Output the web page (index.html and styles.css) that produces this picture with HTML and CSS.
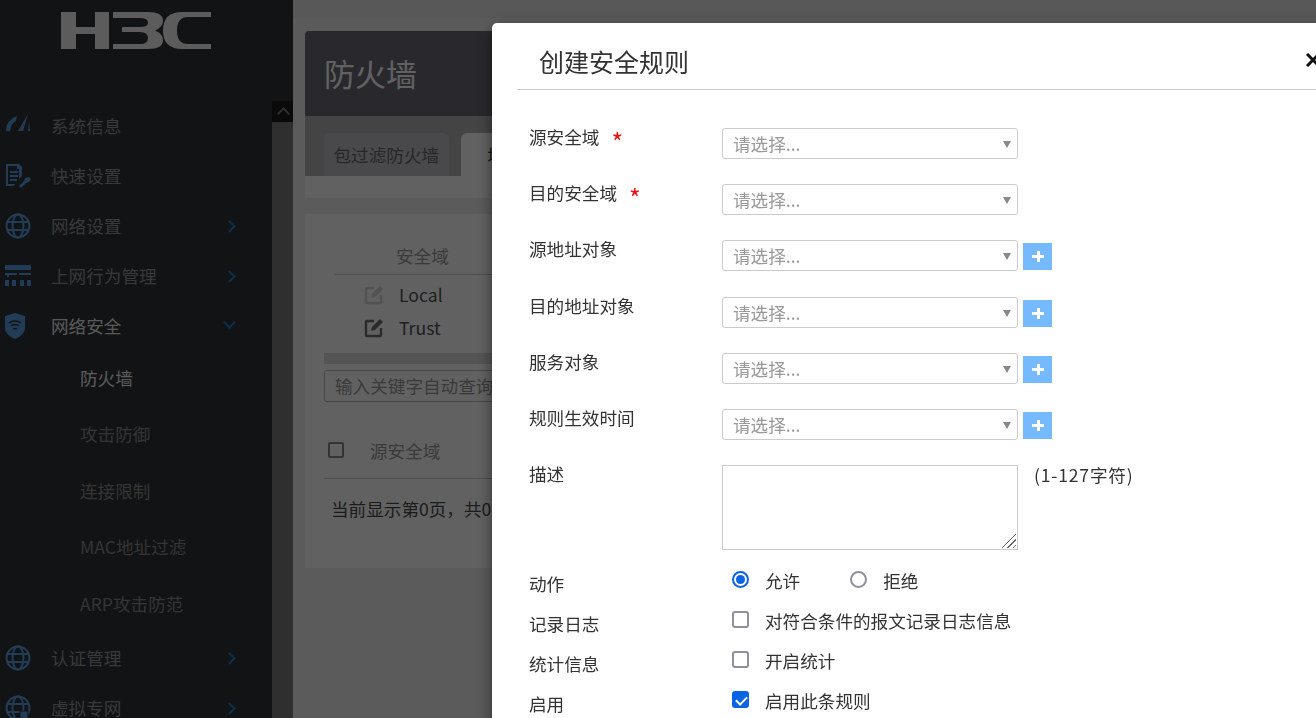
FILE: index.html
```html
<!DOCTYPE html>
<html lang="zh-CN">
  <head>
    <meta charset="UTF-8" />
    <title>防火墙</title>
    <link rel="stylesheet" href="styles.css">
  </head>
  <body>
    <div class="page">
      <aside class="sidebar">
        <div class="logo">
          <svg width="151" height="37" viewBox="0 0 151 37">
            <path d="M1 0h15v15h19v-15h14v37h-14v-15h-19v15h-15z" />
            <path d="M53 0h35q15 0 15 9q0 6-8 9.500q8 3 8 9.500q0 9-15 9h-35v-5h27q8 0 8-6t-8-6h-18v-5h18q8 0 8-4.500t-8-4.500h-27z" />
            <path d="M151 0h-29q-19 0-19 18.500t19 18.500h29v-5h-23q-11 0-11-13.500t11-13.500h23z" />
          </svg>
        </div>
        <div class="side-body">
          <nav class="menu">
            <a class="menu-item">
              <svg class="menu-icon" viewBox="0 3 26 20"><path d="M1 18q0-11 11-15l-1 5q-5 2-6 10zM13 18l10-17-5 17zM24 9l1 9h-2z" /></svg>
              系统信息
            </a>
            <a class="menu-item">
              <svg class="menu-icon" viewBox="0 0 26 26"><path d="M1 1h13l3 3v9l-3 3v-10h-2v-3h-9v18h7l-1 2h-8zM5 8h8v2h-8zM5 12h8v2h-8zM5 16h7v2h-7zM24 14l2 2-2 3-3 1-5 5-2-2 5-5 1-3z" /></svg>
              快速设置
            </a>
            <a class="menu-item has-sub">
              <svg class="menu-icon line" viewBox="0 0 26 26"><circle cx="13" cy="13" r="11.500" /><ellipse cx="13" cy="13" rx="5.500" ry="11.500" /><path d="M2 9h22M2 17h22" /></svg>
              网络设置
            </a>
            <a class="menu-item has-sub">
              <svg class="menu-icon" viewBox="0 0 26 22"><path d="M0 0h26v5h-26zM0 8h12v2h-12zM14 8h12v2h-12zM0 12h2v-2h2v2zM0 15h4v6h-4zM7 15h4v6h-4zM15 15h4v6h-4zM22 15h4v6h-4z" /></svg>
              上网行为管理
            </a>
            <a class="menu-item open has-sub">
              <svg class="menu-icon shield" viewBox="0 0 20 26" preserveAspectRatio="xMinYMid"><path d="M10 0l10 3v12q0 7-10 11q-10-4-10-11v-12z" /><path class="wifi" d="M4 10q6-4 12 0M6 13q4-3 8 0M8 16q2-1 4 0" /></svg>
              网络安全
            </a>
            <a class="sub-item current">防火墙</a>
            <a class="sub-item">攻击防御</a>
            <a class="sub-item">连接限制</a>
            <a class="sub-item">MAC地址过滤</a>
            <a class="sub-item">ARP攻击防范</a>
            <a class="menu-item has-sub">
              <svg class="menu-icon line" viewBox="0 0 26 26"><circle cx="13" cy="13" r="11.500" /><ellipse cx="13" cy="13" rx="5.500" ry="11.500" /><path d="M2 9h22M2 17h22" /></svg>
              认证管理
            </a>
            <a class="menu-item has-sub">
              <svg class="menu-icon line" viewBox="0 0 26 26"><circle cx="13" cy="13" r="11.500" /><ellipse cx="13" cy="13" rx="5.500" ry="11.500" /><path d="M2 9h22M2 17h22" /><rect class="lock" x="15" y="16" width="8" height="8" /></svg>
              虚拟专网
            </a>
          </nav>
          <div class="side-scroll">
            <div class="scroll-up"></div>
          </div>
        </div>
      </aside>

      <main class="main">
        <div class="top-strip"></div>
        <section class="head-card">
          <h1>防火墙</h1>
          <div class="tabs">
            <span class="tab">包过滤防火墙</span>
            <span class="tab active">域间</span>
          </div>
        </section>
        <div class="tab-foot"></div>

        <section class="panel">
          <div class="zone-head">安全域</div>
          <div class="zone-row muted">
            <svg class="edit-icon" viewBox="0 0 20 20"><path class="box" d="M10 3h-7q-1 0-1 1v13q0 1 1 1h13q1 0 1-1v-7" /><path class="pen" d="M7 13l1-4 8-8 3 3-8 8z" /></svg>
            Local
          </div>
          <div class="zone-row">
            <svg class="edit-icon" viewBox="0 0 20 20"><path class="box" d="M10 3h-7q-1 0-1 1v13q0 1 1 1h13q1 0 1-1v-7" /><path class="pen" d="M7 13l1-4 8-8 3 3-8 8z" /></svg>
            Trust
          </div>
          <div class="panel-bar"></div>
          <div class="search-box">输入关键字自动查询</div>
          <div class="table-head">
            <span class="fake-check"></span>
            <span>源安全域</span>
          </div>
          <div class="table-foot">当前显示第0页，共0页</div>
        </section>
      </main>
    </div>

    <div class="overlay"></div>

    <div class="modal">
      <div class="modal-head">
        <h2>创建安全规则</h2>
        <svg class="close" viewBox="0 0 14 14"><path d="M1 1l12 12M13 1l-12 12" /></svg>
      </div>
      <form class="form">
        <div class="row">
          <label>源安全域<em>*</em></label>
          <div class="pick">请选择...</div>
        </div>
        <div class="row">
          <label>目的安全域<em>*</em></label>
          <div class="pick">请选择...</div>
        </div>
        <div class="row">
          <label>源地址对象</label>
          <div class="pick">请选择...</div>
          <button type="button" class="add"></button>
        </div>
        <div class="row">
          <label>目的地址对象</label>
          <div class="pick">请选择...</div>
          <button type="button" class="add"></button>
        </div>
        <div class="row">
          <label>服务对象</label>
          <div class="pick">请选择...</div>
          <button type="button" class="add"></button>
        </div>
        <div class="row">
          <label>规则生效时间</label>
          <div class="pick">请选择...</div>
          <button type="button" class="add"></button>
        </div>
        <div class="row row-desc">
          <label>描述</label>
          <div class="desc-box"><textarea></textarea></div>
          <span class="hint">(1-127字符)</span>
        </div>
        <div class="row-check">
          <label>动作</label>
          <div class="options">
            <input type="radio" name="action" checked />
            <span class="opt-text">允许</span>
            <input class="second" type="radio" name="action" />
            <span class="opt-text">拒绝</span>
          </div>
        </div>
        <div class="row-check">
          <label>记录日志</label>
          <div class="options">
            <input type="checkbox" />
            <span class="opt-text">对符合条件的报文记录日志信息</span>
          </div>
        </div>
        <div class="row-check">
          <label>统计信息</label>
          <div class="options">
            <input type="checkbox" />
            <span class="opt-text">开启统计</span>
          </div>
        </div>
        <div class="row-check">
          <label>启用</label>
          <div class="options">
            <input type="checkbox" checked />
            <span class="opt-text">启用此条规则</span>
          </div>
        </div>
      </form>
    </div>
  </body>
</html>
```

FILE: styles.css
```css
* {
  box-sizing: border-box;
}
html,
body {
  margin: 0;
  height: 100%;
  overflow: hidden;
}
body {
  font-family: "Noto Sans CJK SC", "Liberation Sans", sans-serif;
  font-size: 17.600px;
  color: #333;
}
.page {
  display: flex;
  height: 718px;
  background: #eeeeee;
}

/* sidebar */
.sidebar {
  width: 293px;
  flex: none;
  display: flex;
  flex-direction: column;
  background: #2f3336;
}
.logo {
  height: 101px;
  flex: none;
  padding: 12px 0 0 60px;
}
.logo svg {
  display: block;
  fill: #f2f2f2;
}
.side-body {
  flex: 1;
  display: flex;
  min-height: 0;
}
.menu {
  flex: 1;
  overflow: hidden;
}
.menu-item {
  display: flex;
  align-items: center;
  height: 50px;
  padding-left: 5px;
  line-height: 50px;
  color: #959595;
  position: relative;
}
.menu-item.open {
  color: #e8e8e8;
}
.menu-icon {
  width: 26px;
  height: 26px;
  margin-right: 20px;
  fill: #5a9fe6;
  flex: none;
}
.menu-icon.line {
  fill: none;
  stroke: #5a9fe6;
  stroke-width: 2;
}
.menu-icon .lock {
  fill: #5a9fe6;
  stroke: #2f3336;
  stroke-width: 1;
}
.menu-icon .wifi {
  fill: none;
  stroke: #2f3336;
  stroke-width: 1.500;
}
.has-sub::after {
  content: "";
  position: absolute;
  left: 225px;
  top: 21px;
  width: 7px;
  height: 7px;
  border-top: 2px solid #2678cc;
  border-right: 2px solid #2678cc;
  transform: rotate(45deg);
}
.menu-item.open::after {
  left: 225px;
  top: 17px;
  transform: rotate(135deg);
}
.sub-item {
  display: block;
  height: 56.400px;
  line-height: 54px;
  padding-left: 80px;
  color: #8a8a8a;
}
.sub-item.current {
  color: #eeeeee;
}
.side-scroll {
  width: 21px;
  flex: none;
  background: #7c7c7e;
}
.scroll-up {
  height: 21px;
  background: #1c1c1c;
  position: relative;
}
.scroll-up::after {
  content: "";
  position: absolute;
  left: 7px;
  top: 8px;
  width: 7px;
  height: 7px;
  border-top: 2px solid #777;
  border-left: 2px solid #777;
  transform: rotate(45deg);
}

/* main content behind the dialog */
.main {
  flex: 1;
  min-width: 0;
  padding: 0 0 0 12px;
  overflow: hidden;
}
.top-strip {
  height: 18px;
  margin: 0 0 13px -12px;
  background: #e6e6e6;
}
.head-card {
  background: #b3b3b3;
  border-radius: 4px 4px 0 0;
  overflow: hidden;
}
.head-card h1 {
  margin: 0;
  height: 85px;
  padding-left: 19px;
  font-size: 31px;
  font-weight: 400;
  line-height: 84px;
  color: #fff;
  background: #6c6a74;
}
.tabs {
  display: flex;
  gap: 12px;
  height: 60px;
  padding: 17px 0 0 19px;
}
.tab {
  height: 44px;
  padding: 0 9.500px;
  line-height: 44px;
  border-radius: 6px 6px 0 0;
  background: #bfbfc8;
  color: #666;
  white-space: nowrap;
}
.tab.active {
  padding: 0 27px;
  background: #fff;
  color: #444;
}
.tab-foot {
  height: 22px;
  margin-bottom: 16px;
  background: #fff;
}
.panel {
  height: 354px;
  padding-left: 19px;
  background: #fff;
  white-space: nowrap;
}
.zone-head {
  margin-left: 11px;
  height: 61px;
  padding: 24px 0 0 61px;
  line-height: 36px;
  color: #999;
  border-bottom: 1px solid #ccc;
}
.zone-row {
  display: flex;
  align-items: center;
  height: 33px;
  padding-left: 40px;
  color: #555;
}
.zone-row.muted {
  margin-top: 3px;
}
.zone-row.muted .box {
  stroke: #d8d8d8;
}
.zone-row.muted .pen {
  fill: #d8d8d8;
}
.edit-icon {
  width: 20px;
  height: 20px;
  margin-right: 15px;
}
.box {
  fill: none;
  stroke: #707070;
  stroke-width: 2.400;
}
.pen {
  fill: #707070;
}
.panel-bar {
  height: 11px;
  margin: 9px 0 6px;
  background: #ddd;
}
.search-box {
  width: 400px;
  height: 32px;
  padding-left: 10px;
  line-height: 30px;
  border: 1px solid #bbb;
  border-radius: 3px;
  color: #999;
}
.table-head {
  display: flex;
  align-items: center;
  height: 77px;
  padding: 20px 0 0 4px;
  color: #999;
  border-bottom: 1px solid #ccc;
}
.fake-check {
  width: 16px;
  height: 16px;
  margin-right: 26px;
  border: 2px solid #888;
  border-radius: 2px;
}
.table-foot {
  padding: 15px 0 0 7px;
  line-height: 30px;
  color: #4a4a4a;
}

/* dialog */
.overlay {
  position: fixed;
  inset: 0;
  background: rgba(0, 0, 0, 0.62);
}
.modal {
  position: fixed;
  left: 492px;
  top: 23px;
  width: 860px;
  height: 760px;
  background: #fff;
  border-radius: 5px;
  box-shadow: 0 5px 15px rgba(0, 0, 0, 0.5);
}
.modal-head {
  display: flex;
  align-items: center;
  justify-content: space-between;
  height: 67px;
  margin: 0 0 0 25px;
  padding: 10px 32px 0 22px;
  border-bottom: 1px solid #ccc;
}
.modal-head h2 {
  margin: 0;
  font-size: 25px;
  font-weight: 400;
  color: #333;
}
.close {
  width: 14px;
  height: 14px;
  margin-top: -2px;
  fill: none;
  stroke: #111;
  stroke-width: 3;
}
.form {
  padding: 38px 0 0 37px;
}
.row {
  display: flex;
  align-items: flex-start;
  height: 56.200px;
}
.row-desc {
  height: 99px;
}
label {
  display: block;
  width: 193px;
  flex: none;
  margin-top: -1px;
  line-height: 20px;
  color: #333;
  white-space: nowrap;
}
label em {
  display: inline-block;
  margin-left: 12px;
  font-style: normal;
  font-size: 25px;
  line-height: 20px;
  vertical-align: -8px;
  color: #e11;
}
.pick {
  width: 296px;
  height: 31px;
  padding-left: 10px;
  line-height: 29px;
  border: 1px solid #ccc;
  border-radius: 3px;
  color: #999;
  position: relative;
}
.pick::after {
  content: "";
  position: absolute;
  right: 6px;
  top: 12px;
  border-left: 4px solid transparent;
  border-right: 4px solid transparent;
  border-top: 7px solid #888;
}
.add {
  width: 29px;
  height: 27px;
  margin: 3px 0 0 5px;
  padding: 0;
  border: 0;
  background: #75b9ff;
  position: relative;
}
.add::before,
.add::after {
  content: "";
  position: absolute;
  background: #fff;
}
.add::before {
  left: 9px;
  top: 12px;
  width: 12px;
  height: 3px;
}
.add::after {
  left: 13.500px;
  top: 8px;
  width: 3px;
  height: 11px;
}
.desc-box {
  width: 296px;
  height: 85px;
  position: relative;
}
.desc-box::after {
  content: "";
  position: absolute;
  right: 2px;
  bottom: 2px;
  width: 18px;
  height: 18px;
  background: repeating-linear-gradient(135deg, #fff 0 3px, #666 3px 4px);
  clip-path: polygon(100% 0, 100% 100%, 0 100%);
}
textarea {
  display: block;
  width: 100%;
  height: 100%;
  border: 1px solid #ccc;
  outline: 0;
  margin: 0;
  resize: none;
}
.hint {
  margin-left: 16px;
  letter-spacing: 0.800px;
  line-height: 20px;
  color: #333;
}
.row-check {
  display: flex;
  align-items: center;
  height: 40px;
}
.row-check label {
  margin-top: 0;
}
.options {
  display: flex;
  align-items: center;
  height: 30px;
  margin-top: -9px;
  padding-left: 10px;
}
.options input {
  appearance: none;
  width: 17px;
  height: 17px;
  margin: 0 16px 0 0;
  border: 2px solid #8f8f9d;
  border-radius: 3px;
  background: #fff;
  position: relative;
}
.options input[type="radio"] {
  border-radius: 50%;
}
.options input.second {
  margin-left: 50px;
}
.options input[type="radio"]:checked {
  border-color: #0b63e5;
}
.options input[type="radio"]:checked::after {
  content: "";
  position: absolute;
  left: 2px;
  top: 2px;
  width: 9px;
  height: 9px;
  border-radius: 50%;
  background: #0b63e5;
}
.options input[type="checkbox"]:checked {
  border-color: #0b63e5;
  background: #0b63e5;
}
.options input[type="checkbox"]:checked::after {
  content: "";
  position: absolute;
  left: 2px;
  top: 3px;
  width: 9px;
  height: 5px;
  border-left: 2px solid #fff;
  border-bottom: 2px solid #fff;
  transform: rotate(-45deg);
}
.opt-text {
  line-height: 30px;
  padding-top: 3px;
  color: #333;
}
```
